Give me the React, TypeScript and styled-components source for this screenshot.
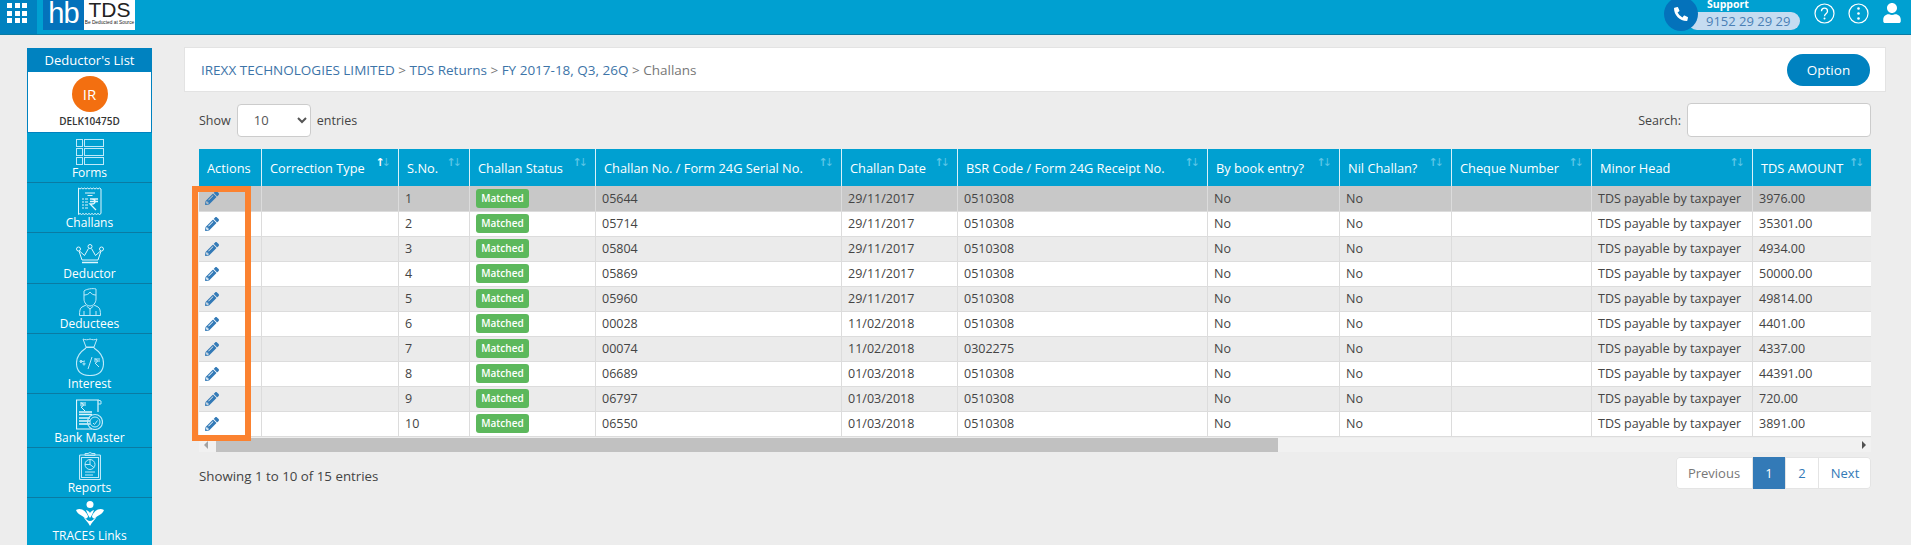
import React from 'react';
import styled, { createGlobalStyle } from 'styled-components';
import { FaPencilAlt, FaPhoneAlt, FaUser } from 'react-icons/fa';

const GlobalStyle = createGlobalStyle`
  html, body {
    margin: 0;
    padding: 0;
    height: 545px;
    overflow: hidden;
    background: #ededed;
    font-family: "Open Sans", "Liberation Sans", sans-serif;
    color: #333;
  }
  * { box-sizing: border-box; }
`;

const Header = styled.header`
  height: 35px;
  background: #00a0d1;
  border-bottom: 1px solid #0a7ba3;
  display: flex;
  align-items: flex-start;
`;

const GridButton = styled.div`
  width: 37px;
  height: 34px;
  background: #0082c0;
  display: grid;
  grid-template-columns: repeat(3, 5px);
  grid-auto-rows: 5px;
  gap: 2.5px;
  justify-content: center;
  padding: 3px 3px 0 0;
`;

const GridDot = styled.span`
  background: #fff;
`;

const Logo = styled.div`
  margin-left: 6px;
  display: flex;
  height: 30px;
`;

const LogoHb = styled.div`
  width: 41px;
  background: #0472bb;
  color: #fff;
  font-size: 29px;
  line-height: 27px;
  text-align: center;
  letter-spacing: -1px;
  font-family: "Liberation Sans", sans-serif;
`;

const LogoTds = styled.div`
  width: 51px;
  background: #fff;
  color: #222;
  text-align: center;
  font-family: "Liberation Sans", sans-serif;
  font-size: 21px;
  line-height: 20px;
  small {
    display: block;
    font-size: 4.8px;
    line-height: 6px;
    white-space: nowrap;
  }
`;

const HeaderRight = styled.div`
  margin-left: auto;
  display: flex;
  align-items: flex-start;
  height: 34px;
  padding: 3px 9px 0 0;
`;

const Support = styled.div`
  position: relative;
  width: 136px;
  height: 31px;
  margin-right: 14px;
`;

const PhoneCircle = styled.div`
  position: absolute;
  left: 0;
  top: -6px;
  width: 34px;
  height: 34px;
  border-radius: 50%;
  background: #0472bb;
  color: #fff;
  display: flex;
  align-items: center;
  justify-content: center;
  z-index: 1;
  font-size: 14px;
`;

const SupportLabel = styled.div`
  position: absolute;
  left: 43px;
  top: -6px;
  font-size: 10.5px;
  line-height: 14px;
  font-weight: 700;
  color: #fff;
`;

const SupportNumber = styled.div`
  position: absolute;
  left: 24px;
  top: 9px;
  width: 112px;
  height: 18px;
  border-radius: 9px;
  background: #c5dcf1;
  color: #4a7fb5;
  font-size: 13px;
  line-height: 18px;
  padding-left: 18px;
  white-space: nowrap;
`;

const RoundIcon = styled.svg`
  width: 21px;
  height: 21px;
  margin-right: 13px;
  display: block;
`;

const UserIcon = styled.div`
  color: #fff;
  font-size: 20px;
  display: flex;
`;

const Body = styled.div`
  display: flex;
  align-items: flex-start;
  padding: 12px 25px 0 27px;
`;

const Sidebar = styled.aside`
  width: 125px;
  flex: none;
  margin-top: 1px;
  margin-right: 32px;
  background: #00a0d1;
  color: #fff;
`;

const SideTitle = styled.div`
  height: 24px;
  background: #0082c0;
  text-align: center;
  font-size: 13px;
  line-height: 24px;
`;

const Profile = styled.div`
  height: 61px;
  background: #fff;
  border: 1px solid #0082c0;
  border-top: none;
  display: flex;
  flex-direction: column;
  align-items: center;
  padding-top: 4px;
`;

const Avatar = styled.div`
  width: 36px;
  height: 36px;
  border-radius: 50%;
  background: #f36f10;
  color: #fff;
  font-size: 15px;
  line-height: 36px;
  text-align: center;
`;

const ProfileCode = styled.div`
  color: #333;
  font-size: 10px;
  font-weight: 600;
  line-height: 14px;
  margin-top: 2px;
`;

const SideItem = styled.div<{ $h: number }>`
  height: ${p => p.$h}px;
  border-bottom: 1px solid #0a7ba3;
  display: flex;
  flex-direction: column;
  align-items: center;
  justify-content: flex-end;
  font-size: 12px;
  line-height: 15px;
  padding-bottom: 2px;
  &:last-child { border-bottom: none; }
`;

const SideIcon = styled.svg`
  fill: none;
  stroke: #bfeafa;
  stroke-width: 1;
  display: block;
  flex: none;
`;

const Main = styled.main`
  flex: 1;
  min-width: 0;
  position: relative;
`;

const Breadcrumb = styled.div`
  height: 45px;
  background: #fff;
  border: 1px solid #e3e3e3;
  display: flex;
  align-items: center;
  justify-content: space-between;
  padding: 0 15px 0 16px;
  font-size: 13.5px;
  color: #777;
`;

const Crumb = styled.span`
  color: #3d74a8;
`;

const OptionButton = styled.button`
  width: 83px;
  height: 32px;
  border: none;
  border-radius: 16px;
  background: #0082c0;
  color: #fff;
  font: inherit;
  font-size: 13.5px;
`;

const Content = styled.div`
  padding: 11px 15px 0;
  position: relative;
`;

const Controls = styled.div`
  height: 34px;
  display: flex;
  align-items: center;
  justify-content: space-between;
  font-size: 12.5px;
  color: #444;
  margin-bottom: 12px;
`;

const ShowGroup = styled.div`
  display: flex;
  align-items: center;
  gap: 6px;
`;

const FakeSelect = styled.select`
  width: 74px;
  height: 33px;
  border: 1px solid #ccc;
  border-radius: 4px;
  background: #fff;
  padding-left: 12px;
  font: inherit;
  font-size: 13px;
  color: #555;
`;

const SearchGroup = styled.label`
  display: flex;
  align-items: center;
  gap: 6px;
`;

const SearchInput = styled.input`
  width: 184px;
  height: 34px;
  border: 1px solid #ccc;
  border-radius: 4px;
  background: #fff;
`;

const TableWrap = styled.div`
  overflow: hidden;
`;

const Table = styled.table`
  width: 1672px;
  table-layout: fixed;
  border-collapse: collapse;
  font-size: 12.5px;
`;

const Th = styled.th`
  height: 37px;
  background: #00a0d1;
  color: #fff;
  font-weight: 400;
  font-size: 12.8px;
  text-align: left;
  padding: 0 8px;
  border-left: 1px solid #d9f1f9;
  position: relative;
  white-space: nowrap;
  overflow: hidden;
  &:first-child { border-left: none; }
`;

const SortMark = styled.span<{ $active?: boolean }>`
  position: absolute;
  right: 7px;
  top: 8px;
  font-family: "DejaVu Sans", sans-serif;
  font-size: 11px;
  line-height: 12px;
  letter-spacing: -3px;
  padding-right: 3px;
  color: #5cc5e6;
  b {
    font-weight: 700;
    color: ${p => (p.$active ? '#fff' : '#5cc5e6')};
  }
`;

const Tr = styled.tr<{ $bg: string }>`
  background: ${p => p.$bg};
`;

const Td = styled.td`
  height: 25px;
  padding: 0 5px 0 6px;
  border-left: 1px solid #dcdcdc;
  border-bottom: 1px solid #dcdcdc;
  color: #444;
  white-space: nowrap;
  overflow: hidden;
  &:first-child { border-left: none; }
`;

const EditIcon = styled(FaPencilAlt)`
  color: #337ab7;
  font-size: 14px;
  display: block;
`;

const Badge = styled.span`
  display: inline-block;
  width: 53px;
  height: 19px;
  border-radius: 3px;
  background: #5cb85c;
  color: #fff;
  font-size: 10px;
  font-weight: 600;
  line-height: 19px;
  text-align: center;
  vertical-align: middle;
`;

const Scrollbar = styled.div`
  height: 14px;
  margin-top: 1px;
  background: #f1f1f1;
  display: flex;
  align-items: center;
  justify-content: space-between;
  position: relative;
`;

const ScrollArrow = styled.span<{ $dir: 'left' | 'right' }>`
  width: 0;
  height: 0;
  margin: 0 5px;
  border-top: 4px solid transparent;
  border-bottom: 4px solid transparent;
  ${p => (p.$dir === 'left' ? 'border-right: 4px solid #a3a3a3;' : 'border-left: 4px solid #505050;')}
`;

const ScrollThumb = styled.span`
  position: absolute;
  left: 17px;
  top: 0;
  width: 1062px;
  height: 14px;
  background: #c1c1c1;
`;

const Footer = styled.div`
  display: flex;
  justify-content: space-between;
  align-items: flex-start;
  margin-top: 5px;
  color: #444;
`;

const FooterInfo = styled.div`
  padding-top: 10px;
  line-height: 18px;
  font-size: 13.3px;
`;

const Pagination = styled.div`
  display: flex;
  height: 32px;
  border-radius: 4px;
  overflow: hidden;
  background: #fff;
  box-shadow: 0 0 0 1px #e4e4e4 inset;
`;

const PageLink = styled.span<{ $w: number; $active?: boolean; $muted?: boolean }>`
  width: ${p => p.$w}px;
  text-align: center;
  line-height: 32px;
  font-size: 13px;
  background: ${p => (p.$active ? '#337ab7' : 'transparent')};
  color: ${p => (p.$active ? '#fff' : p.$muted ? '#777' : '#337ab7')};
  & + & { border-left: 1px solid #e4e4e4; }
`;

const Highlight = styled.div`
  position: absolute;
  left: 8px;
  top: 94px;
  width: 59px;
  height: 255px;
  border: 6px solid #fb8230;
  pointer-events: none;
`;

const columns = [
  { title: 'Actions', width: 62.5 },
  { title: 'Correction Type', width: 137, active: true },
  { title: 'S.No.', width: 71 },
  { title: 'Challan Status', width: 126 },
  { title: 'Challan No. / Form 24G Serial No.', width: 246 },
  { title: 'Challan Date', width: 116 },
  { title: 'BSR Code / Form 24G Receipt No.', width: 250 },
  { title: 'By book entry?', width: 132 },
  { title: 'Nil Challan?', width: 112 },
  { title: 'Cheque Number', width: 140 },
  { title: 'Minor Head', width: 161 },
  { title: 'TDS AMOUNT', width: 119 },
];

const rows = [
  ['05644', '29/11/2017', '0510308', '3976.00'],
  ['05714', '29/11/2017', '0510308', '35301.00'],
  ['05804', '29/11/2017', '0510308', '4934.00'],
  ['05869', '29/11/2017', '0510308', '50000.00'],
  ['05960', '29/11/2017', '0510308', '49814.00'],
  ['00028', '11/02/2018', '0510308', '4401.00'],
  ['00074', '11/02/2018', '0302275', '4337.00'],
  ['06689', '01/03/2018', '0510308', '44391.00'],
  ['06797', '01/03/2018', '0510308', '720.00'],
  ['06550', '01/03/2018', '0510308', '3891.00'],
];

const rowColor = (i: number) => {
  if (i === 0) return '#c8c8c8';
  return i % 2 === 0 ? '#ebebeb' : '#fff';
};

const sideItems = [
  {
    label: 'Forms',
    height: 50,
    w: 28,
    h: 26,
    icon: (
      <>
        <rect x="0.5" y="0.5" width="6" height="7" />
        <rect x="0.5" y="9.5" width="6" height="7" />
        <rect x="0.5" y="18.5" width="6" height="7" />
        <rect x="8.5" y="0.5" width="19" height="7" />
        <rect x="8.5" y="9.5" width="19" height="7" />
        <rect x="8.5" y="18.5" width="19" height="7" />
      </>
    ),
  },
  {
    label: 'Challans',
    height: 50,
    w: 24,
    h: 28,
    icon: (
      <g stroke="#dff6fd">
        <path d="M0.5 1l1.500 1 1.500-1 1.500 1 1.500-1 1.500 1 1.500-1 1.500 1 1.500-1 1.500 1 1.500-1 1.500 1 1.500-1 1.500 1 1.500-1 1.500 1v24.500l-1.500 1-1.500-1-1.500 1-1.500-1-1.500 1-1.500-1-1.500 1-1.500-1-1.500 1-1.500-1-1.500 1-1.500-1-1.500 1-1.500-1-1.500 1z" />
        <path d="M7 6h10M9.500 8.500h5M4 12h2M4 15h2M4 18h2M4 21h2M7 12h3M7 15h3M7 18h3M7 21h3" />
        <path d="M12 12h8M12 14.500h8M14 12c4 0 4 5 0 5h-2l6 6" strokeWidth="1.300" />
      </g>
    ),
  },
  {
    label: 'Deductor',
    height: 51,
    w: 28,
    h: 22,
    icon: (
      <g stroke="#dff6fd">
        <circle cx="2.500" cy="5" r="2" />
        <circle cx="14" cy="2.500" r="2" />
        <circle cx="25.500" cy="5" r="2" />
        <path d="M3.500 7l5 4.500 4-7M24.500 7l-5 4.500-4-7M3 7l3 9h16l3-9" />
        <path d="M6 18.500h16" strokeWidth="1.500" />
      </g>
    ),
  },
  {
    label: 'Deductees',
    height: 50,
    w: 22,
    h: 28,
    icon: (
      <>
        <path d="M5 3c2-2 9-3 12-2v10c0 4-3 7-6 7s-6-3-6-7z" />
        <path d="M5 7c3 0 5-1 6-3 1.500 2 3 3 6 3" />
        <path d="M7 17l-4 2c-2 1-2.500 4-2.500 8.500h21c0-4.500-.5-7.500-2.500-8.500l-4-2M7.500 18l3.500 3 3.500-3M11 21v6.500M5 23v4.500M17 23v4.500" />
      </>
    ),
  },
  {
    label: 'Interest',
    height: 60,
    w: 28,
    h: 38,
    icon: (
      <>
        <path d="M7 1c2 1 5 1 7 0 2 1 5 1 7 0l-3 8h-8z" />
        <path d="M9.500 9.500h9M10 10C4 14 .5 19 .5 25c0 9 6 12.500 13.500 12.500S27.500 34 27.500 25c0-6-3.500-11-9.500-15" strokeWidth="1.100" />
        <path d="M16 19l-4 12M4 24l5-1M5 22.500a1 1 0 1 0 .01 0M8 25a1 1 0 1 0 .01 0M18 21h6M18 23h6M19 21c3 0 3 4 0 4l4 4" />
      </>
    ),
  },
  {
    label: 'Bank Master',
    height: 54,
    w: 27,
    h: 31,
    icon: (
      <>
        <path d="M22 13V1H.5v29H16" strokeWidth="1.200" stroke="#dff6fd" />
        <path d="M22 1l3 1v3h-3" />
        <path d="M4 4h6M4 6h6M5 4c3 0 3 4 0 4l4 4" stroke="#dff6fd" />
        <path d="M3 13h13M3 15.500h13" strokeWidth="1.500" stroke="#dff6fd" />
        <path d="M3 19h11M3 22h11M3 25h11" strokeWidth="1.500" stroke="#dff6fd" />
        <circle cx="19" cy="23" r="7.500" strokeWidth="1.200" />
        <circle cx="19" cy="23" r="5" />
        <path d="M17 24l1.500 1.500 3-4" />
      </>
    ),
  },
  {
    label: 'Reports',
    height: 50,
    w: 22,
    h: 28,
    icon: (
      <>
        <rect x="0.500" y="3" width="21" height="24.500" rx="1" strokeWidth="1.200" />
        <rect x="2.500" y="5.500" width="17" height="20" />
        <path d="M6 3.500V1.500h3l2-1 2 1h3v2z" />
        <circle cx="11" cy="12.500" r="5" />
        <path d="M11 12.500V7.500M11 12.500l4 3M11 12.500H6M6 20h10M6 23h8" />
      </>
    ),
  },
  {
    label: 'TRACES Links',
    height: 47,
    w: 28,
    h: 27,
    icon: (
      <g fill="#fff" stroke="none">
        <circle cx="14" cy="3.500" r="3.500" />
        <path d="M0 9c5-3 10 1 12 6 0 2-2 3-3 2C6 14 2 14 0 9zM28 9c-5-3-10 1-12 6 0 2 2 3 3 2 3-3 7-3 9-8z" />
        <path d="M14 25c-2-4-5-6-7-10 3 3 5 5 7 5s4-2 7-5c-2 4-5 6-7 10zM14 17c-2-3-3-5-4-8 2 1 3 1 4 3 1-2 2-2 4-3-1 3-2 5-4 8z" />
      </g>
    ),
  },
];

const App: React.FC = () => {
  return (
    <>
      <GlobalStyle />
      <Header>
        <GridButton>
          {Array.from({ length: 9 }).map((_, i) => (
            <GridDot key={i} />
          ))}
        </GridButton>
        <Logo>
          <LogoHb>hb</LogoHb>
          <LogoTds>
            TDS
            <small>Be Deducted at Source</small>
          </LogoTds>
        </Logo>
        <HeaderRight>
          <Support>
            <PhoneCircle>
              <FaPhoneAlt />
            </PhoneCircle>
            <SupportLabel>Support</SupportLabel>
            <SupportNumber>9152 29 29 29</SupportNumber>
          </Support>
          <RoundIcon viewBox="0 0 21 21">
            <circle cx="10.5" cy="10.5" r="9.5" fill="none" stroke="#fff" strokeWidth="1.2" />
            <path d="M7.5 8.200c0-4 6-4 6 0 0 2.500-3 2.500-3 5" fill="none" stroke="#fff" strokeWidth="1.3" />
            <circle cx="10.5" cy="15.5" r="1" fill="#fff" />
          </RoundIcon>
          <RoundIcon viewBox="0 0 21 21">
            <circle cx="10.5" cy="10.5" r="9.5" fill="none" stroke="#fff" strokeWidth="1.2" />
            <circle cx="10.5" cy="5.5" r="1.3" fill="#fff" />
            <circle cx="10.5" cy="10.5" r="1.3" fill="#fff" />
            <circle cx="10.5" cy="15.5" r="1.3" fill="#fff" />
          </RoundIcon>
          <UserIcon>
            <FaUser />
          </UserIcon>
        </HeaderRight>
      </Header>
      <Body>
        <Sidebar>
          <SideTitle>Deductor's List</SideTitle>
          <Profile>
            <Avatar>IR</Avatar>
            <ProfileCode>DELK10475D</ProfileCode>
          </Profile>
          {sideItems.map(item => (
            <SideItem key={item.label} $h={item.height}>
              <SideIcon width={item.w} height={item.h} viewBox={`0 0 ${item.w} ${item.h}`}>
                {item.icon}
              </SideIcon>
              {item.label}
            </SideItem>
          ))}
        </Sidebar>
        <Main>
          <Breadcrumb>
            <span>
              <Crumb>IREXX TECHNOLOGIES LIMITED</Crumb> &gt; <Crumb>TDS Returns</Crumb> &gt;{' '}
              <Crumb>FY 2017-18, Q3, 26Q</Crumb> &gt; Challans
            </span>
            <OptionButton>Option</OptionButton>
          </Breadcrumb>
          <Content>
            <Controls>
              <ShowGroup>
                Show
                <FakeSelect defaultValue="10">
                  <option>10</option>
                </FakeSelect>
                entries
              </ShowGroup>
              <SearchGroup>
                Search:
                <SearchInput />
              </SearchGroup>
            </Controls>
            <TableWrap>
              <Table>
                <colgroup>
                  {columns.map(col => (
                    <col key={col.title} style={{ width: col.width }} />
                  ))}
                </colgroup>
                <thead>
                  <tr>
                    {columns.map((col, i) => (
                      <Th key={col.title}>
                        {col.title}
                        {i > 0 && (
                          <SortMark $active={col.active}>
                            <b>↑</b>↓
                          </SortMark>
                        )}
                      </Th>
                    ))}
                  </tr>
                </thead>
                <tbody>
                  {rows.map((row, i) => (
                    <Tr key={row[0]} $bg={rowColor(i)}>
                      <Td>
                        <EditIcon />
                      </Td>
                      <Td />
                      <Td>{i + 1}</Td>
                      <Td>
                        <Badge>Matched</Badge>
                      </Td>
                      <Td>{row[0]}</Td>
                      <Td>{row[1]}</Td>
                      <Td>{row[2]}</Td>
                      <Td>No</Td>
                      <Td>No</Td>
                      <Td />
                      <Td>TDS payable by taxpayer</Td>
                      <Td>{row[3]}</Td>
                    </Tr>
                  ))}
                </tbody>
              </Table>
            </TableWrap>
            <Scrollbar>
              <ScrollArrow $dir="left" />
              <ScrollThumb />
              <ScrollArrow $dir="right" />
            </Scrollbar>
            <Footer>
              <FooterInfo>Showing 1 to 10 of 15 entries</FooterInfo>
              <Pagination>
                <PageLink $w={76} $muted>Previous</PageLink>
                <PageLink $w={33} $active>1</PageLink>
                <PageLink $w={33}>2</PageLink>
                <PageLink $w={53}>Next</PageLink>
              </Pagination>
            </Footer>
            <Highlight />
          </Content>
        </Main>
      </Body>
    </>
  );
};

export default App;
